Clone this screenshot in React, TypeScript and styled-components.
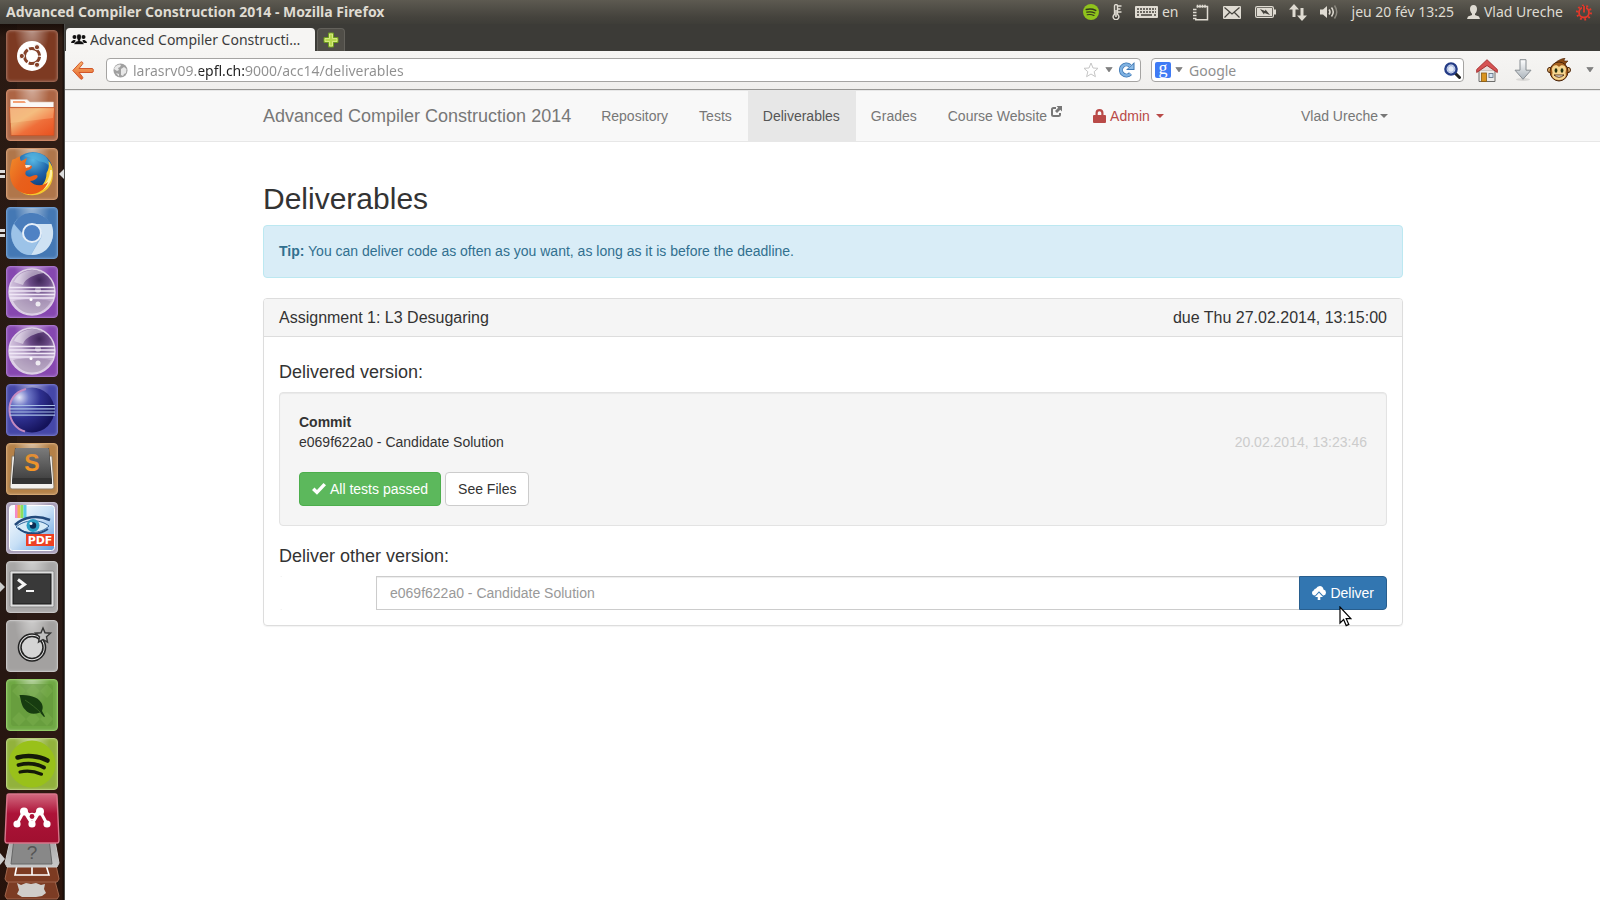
import React from 'react';
import styled, { createGlobalStyle } from 'styled-components';

const GlobalStyle = createGlobalStyle`
  *, *::before, *::after { box-sizing: border-box; }
  body { margin: 0; background: #fff; }
  button, input { font: inherit; margin: 0; }
  svg { display: block; flex: none; }
`;

const systemFont = '"Noto Sans", "Open Sans", sans-serif';
const pageFont = '"Liberation Sans", Arial, sans-serif';

/* ---------- desktop shell ---------- */

const Desktop = styled.div`
  min-height: 100vh;
  display: flex;
  flex-direction: column;
  font-family: ${systemFont};
`;

const TopPanel = styled.header`
  height: 24px;
  display: flex;
  align-items: center;
  justify-content: space-between;
  padding: 0 8px 0 6px;
  background: linear-gradient(#5d5a51, #45433d 70%, #3e3d38);
  color: #dfdbd2;
  font-size: 14px;
  line-height: 20px;
  white-space: nowrap;
`;

const WindowTitle = styled.strong`
  font-weight: 700;
`;

const Indicators = styled.div`
  display: flex;
  align-items: center;
  gap: 13px;
`;

const Indicator = styled.button<{ $minWidth?: number }>`
  display: flex;
  align-items: center;
  justify-content: center;
  gap: 4px;
  min-width: ${(p) => p.$minWidth ?? 0}px;
  padding: 0;
  border: 0;
  background: none;
  color: inherit;
`;

const Workspace = styled.div`
  flex: 1;
  display: flex;
  align-items: stretch;
`;

const Launcher = styled.nav`
  width: 65px;
  flex: none;
  display: flex;
  flex-direction: column;
  gap: 7px;
  padding: 6px 0 0 6px;
  border-right: 1px solid #4c4c4a;
  background: linear-gradient(90deg, rgba(0, 0, 0, 0.12) 17px, transparent 17px, transparent 62px, rgba(0, 0, 0, 0.4) 63px),
    linear-gradient(#1b0f0a, #301d14 14px, #2c1d18 60%, #2c150d);
`;

const Tile = styled.button<{ $bg: string; $edge: string }>`
  position: relative;
  width: 52px;
  height: 52px;
  flex: none;
  padding: 0;
  border: 1px solid ${(p) => p.$edge};
  border-radius: 4px;
  background: radial-gradient(ellipse at 50% -10%, rgba(255, 255, 255, 0.5), transparent 50%), ${(p) => p.$bg};
  box-shadow: inset 0 0 3px rgba(255, 255, 255, 0.3);

  & > svg {
    margin: -1px;
  }
`;

const Pips = styled.span<{ $double?: boolean }>`
  position: absolute;
  left: -7px;
  top: ${(p) => (p.$double ? 21 : 20)}px;
  width: 5px;
  height: ${(p) => (p.$double ? 8 : 10)}px;
  background: ${(p) => (p.$double ? 'linear-gradient(#ddd 3px, transparent 3px 5px, #ddd 5px)' : '#ccc')};
  clip-path: ${(p) => (p.$double ? 'none' : 'polygon(0 0, 100% 50%, 0 100%)')};
`;

const FocusArrow = styled.span`
  position: absolute;
  left: 52px;
  top: 20px;
  width: 5px;
  height: 10px;
  background: #ddd;
  clip-path: polygon(100% 0, 0 50%, 100% 100%);
`;

const FoldedStack = styled.div`
  margin: -6px 0 0 -6px;
`;

const Browser = styled.div`
  flex: 1;
  min-width: 0;
  display: flex;
  flex-direction: column;
  background: #fff;
`;

/* ---------- browser chrome ---------- */

const TabStrip = styled.div`
  height: 27px;
  display: flex;
  align-items: flex-end;
  gap: 2px;
  padding-left: 1px;
  background: #3c3b37;
`;

const Tab = styled.div`
  height: 23px;
  width: 249px;
  display: flex;
  align-items: center;
  gap: 3px;
  padding: 0 6px 0 5px;
  border-radius: 4px 4px 0 0;
  background: #f6f5f3;
  color: #3c3c3c;
  font-size: 14px;
  line-height: 20px;

  span {
    overflow: hidden;
    white-space: nowrap;
    text-overflow: ellipsis;
  }
`;

const NewTab = styled.button`
  width: 28px;
  height: 23px;
  display: grid;
  place-items: center;
  padding: 0;
  border: 1px solid #63615b;
  border-bottom: 0;
  border-radius: 4px 4px 0 0;
  background: #504e48;
`;

const Toolbar = styled.div`
  height: 39px;
  display: flex;
  align-items: center;
  padding: 0 6px 0 7px;
  border-bottom: 1px solid #979693;
  background: linear-gradient(#f6f5f3, #f0efed);
  font-size: 14px;
`;

const IconButton = styled.button<{ $gap?: number }>`
  flex: none;
  margin-left: ${(p) => p.$gap ?? 0}px;
  padding: 0;
  border: 0;
  background: none;
`;

const Field = styled.label<{ $basis: string; $gap: number }>`
  flex: ${(p) => p.$basis};
  min-width: 0;
  height: 24px;
  margin-left: ${(p) => p.$gap}px;
  display: flex;
  align-items: center;
  border: 1px solid #a5a4a2;
  border-radius: 4px;
  background: #fff;
`;

const AddressField = styled(Field)`
  padding: 0 5px 0 6px;
`;

const SearchField = styled(Field)`
  padding: 0 2px 0 3px;
`;

const FieldInput = styled.input`
  flex: 1;
  min-width: 0;
  height: 20px;
  padding: 0 0 0 6px;
  border: 0;
  outline: 0;
  background: none;
  color: #8f8f8f;
  &::placeholder { color: #8f8f8f; opacity: 1; }
`;

/* The host name is drawn darker than the rest of the address. */
const AddressInput = styled(FieldInput)`
  padding-left: 5px;
  color: transparent;
  background: linear-gradient(90deg, #8f8f8f 71px, #222 71px 118px, #8f8f8f 118px);
  background-clip: text;
  -webkit-background-clip: text;
`;

const GoogleMark = styled.span`
  width: 16px;
  height: 16px;
  flex: none;
  border-radius: 2px;
  background: #3f7bf5;
  color: #fff;
  font: 400 18px/12px "Liberation Serif", serif;
  text-align: center;
`;

/* ---------- web page ---------- */

const Page = styled.div`
  font-family: ${pageFont};
  font-size: 14px;
  line-height: 20px;
  color: #333;
`;

const Navbar = styled.nav`
  border: solid #e7e7e7;
  border-width: 1px 0;
  background: #f8f8f8;
`;

const Container = styled.div`
  max-width: 1171px;
  margin: 0 auto;
  padding: 0 15px 0 16px;
`;

const NavRow = styled(Container)`
  display: flex;
`;

const Brand = styled.a`
  padding: 15px 15px 15px 0;
  font-size: 18px;
  color: #777;
  text-decoration: none;
  white-space: nowrap;
`;

const NavLink = styled.a<{ $active?: boolean; $danger?: boolean }>`
  display: flex;
  align-items: center;
  gap: 4px;
  padding: 15px 16px 15px 15px;
  color: ${(p) => (p.$active ? '#555' : p.$danger ? '#b94a48' : '#777')};
  background: ${(p) => (p.$active ? '#e7e7e7' : 'transparent')};
  text-decoration: none;
  white-space: nowrap;

  & > sup { line-height: 0; align-self: flex-start; }
`;

const UserLink = styled(NavLink)`
  gap: 2px;
  margin-left: auto;
  padding-right: 15px;
`;

const Caret = styled.span<{ $space?: number }>`
  margin-left: ${(p) => p.$space ?? 0}px;
  border: 4px solid transparent;
  border-top-color: currentColor;
  border-bottom: 0;
`;

const Main = styled(Container).attrs({ as: 'main' })`
  padding-top: 40px;
`;

const Title = styled.h2`
  margin: 0 0 10px;
  font-size: 30px;
  line-height: 33px;
  font-weight: 400;
`;

const Alert = styled.div`
  margin-bottom: 20px;
  padding: 15px 15px 16px;
  border: 1px solid #bce8f1;
  border-radius: 4px;
  background: #d9edf7;
  color: #31708f;
`;

const Panel = styled.section`
  border: 1px solid #ddd;
  border-radius: 4px;
  box-shadow: 0 1px 1px rgba(0, 0, 0, 0.05);
`;

const PanelHeading = styled.header`
  display: flex;
  justify-content: space-between;
  padding: 10px 15px;
  border-bottom: 1px solid #ddd;
  border-radius: 3px 3px 0 0;
  background: #f5f5f5;
  font-size: 16px;
  line-height: 17px;
`;

const PanelTitle = styled.h3`
  margin: 0;
  font-size: 16px;
  font-weight: 400;
`;

const PanelBody = styled.div`
  padding: 25px 15px 15px;
`;

const SubTitle = styled.h4`
  margin: 0 0 10px;
  font-size: 18px;
  line-height: 20px;
  font-weight: 400;
`;

const Well = styled.div`
  margin-bottom: 20px;
  padding: 19px;
  border: 1px solid #e3e3e3;
  border-radius: 4px;
  background: #f5f5f5;
  box-shadow: inset 0 1px 1px rgba(0, 0, 0, 0.05);
`;

const CommitRow = styled.div`
  display: flex;
  justify-content: space-between;
  margin-bottom: 20px;

  time { color: #ccc; }
`;

const ButtonRow = styled.div`
  display: flex;
  gap: 4px;
`;

const tones = {
  success: ['#fff', '#5cb85c', '#4cae4c'],
  plain: ['#333', '#fff', '#ccc'],
  primary: ['#fff', '#3276b1', '#285e8e'],
};

const Button = styled.button<{ $tone: keyof typeof tones; $attached?: boolean }>`
  height: 34px;
  display: flex;
  align-items: center;
  gap: 4px;
  padding: 6px 12px;
  border: 1px solid ${(p) => tones[p.$tone][2]};
  border-radius: ${(p) => (p.$attached ? '0 4px 4px 0' : '4px')};
  background: ${(p) => tones[p.$tone][1]};
  color: ${(p) => tones[p.$tone][0]};
  white-space: nowrap;
`;

const InputGroup = styled.form`
  display: flex;
`;

const Addon = styled.label`
  width: 97px;
  border-radius: 4px 0 0 4px;
  background: linear-gradient(#f1f1f1, #f1f1f1) 0 0 / 3px 1px no-repeat,
    linear-gradient(#f1f1f1, #f1f1f1) 0 100% / 3px 1px no-repeat;
`;

const VersionInput = styled.input`
  flex: 1;
  min-width: 0;
  height: 34px;
  padding: 6px 13px;
  border: 1px solid #ccc;
  border-right: 0;
  box-shadow: inset 0 1px 1px rgba(0, 0, 0, 0.075);
  outline: 0;
  &::placeholder { color: #999; opacity: 1; }
`;

const ButtonHolder = styled.div`
  position: relative;
`;

const Pointer = styled.svg`
  position: absolute;
  left: 40px;
  top: 30px;
`;

/* ---------- drawings ---------- */

const DownArrow = () => (
  <svg width="8" height="6" viewBox="0 0 8 6">
    <path d="M.8.5h6.400L4 5z" fill="#808080" stroke="#666" strokeWidth=".5" />
  </svg>
);

const UbuntuIcon = () => (
  <svg width="52" height="52" viewBox="0 0 52 52">
    <circle cx="26" cy="26" r="15" fill="#fff" />
    <circle cx="26" cy="26" r="7.6" fill="none" stroke="#85422a" strokeWidth="3" strokeDasharray="14.4 1.5" strokeDashoffset="-.8" />
    <g fill="#85422a" stroke="#fff" strokeWidth="1">
      <circle cx="15.8" cy="26" r="2.6" />
      <circle cx="31" cy="17.2" r="2.6" />
      <circle cx="31" cy="34.8" r="2.6" />
    </g>
  </svg>
);

const FolderIcon = () => (
  <svg width="52" height="52" viewBox="0 0 52 52">
    <defs>
      <linearGradient id="folder" x1="0" y1="0" x2="1" y2="1">
        <stop offset="0" stopColor="#f0a070" />
        <stop offset=".35" stopColor="#efb072" />
        <stop offset=".6" stopColor="#ef6f3a" />
        <stop offset="1" stopColor="#e8501e" />
      </linearGradient>
    </defs>
    <path d="M4.500 18V10.500h16.500l3 2.500h23.500V19z" fill="#fbf8f6" stroke="#d8c0b0" strokeWidth=".6" />
    <path d="M7 12h11.500l1.500 2H7z" fill="#f3a074" />
    <path d="M3.500 18.500h45L48 46.500H5z" fill="url(#folder)" stroke="#c4562a" strokeWidth=".8" />
    <path d="M4 19.500h44L47 29 4.500 34z" fill="#ffd9a0" opacity=".3" />
  </svg>
);

const FirefoxIcon = () => (
  <svg width="52" height="52" viewBox="0 0 52 52">
    <defs>
      <radialGradient id="ffblue" cx=".5" cy=".2" r=".8">
        <stop offset="0" stopColor="#58b8e4" />
        <stop offset=".5" stopColor="#1d62a8" />
        <stop offset="1" stopColor="#0a2f66" />
      </radialGradient>
      <linearGradient id="fffox" x1="0" y1="0" x2="1" y2=".6">
        <stop offset="0" stopColor="#f08a2a" />
        <stop offset=".5" stopColor="#e8601c" />
        <stop offset="1" stopColor="#ea5a14" />
      </linearGradient>
    </defs>
    <circle cx="27" cy="24" r="20" fill="url(#ffblue)" />
    <path d="M18 8c5-4 15-5 22 1 3 4 4 6 4 10-5-7-10-4-13-7-4-3-8-2-13-4z" fill="#54b4df" opacity=".6" />
    <path d="M46.500 20c2 12-2 20-9 24-8 5-18 4-24-1 8 2 17 0 22-5 4-4 5-9 5-13 2-3 3-7 2-12 2 2 3 4 4 7z" fill="#f5c92e" />
    <path d="M44 22c0 8-4 14-9 17l5-3-3 6c6-4 10-11 9-20z" fill="#fff0a0" />
    <path d="M6 12c1-1 2-1 3-1 1-1 3-2 5-2.500 0 2 0 3 1 4.500 3-1 4-2 6-3-.5 2-1.500 4-2 6 2 2 5 1 7 2 0 3-3 4-6 5-1 2-1 4 1 5 3 2 6-1 9-1 2 0 2 2 1 3-2 2-4 3-7 3 4 5 12 6 18 1-3 9-12 13-21 12C10 44 4 36 4 26c0-6 1-9 2-14z" fill="url(#fffox)" />
    <path d="M19 17c2 0 5 0 6 .5-1 1.500-3 2-5 2.500z" fill="#fbe6d0" />
  </svg>
);

const ChromiumIcon = () => (
  <svg width="52" height="52" viewBox="0 0 52 52">
    <circle cx="26" cy="27" r="21" fill="#8db6e0" />
    <path d="M8 17C13 8 19 6 26 6s15 4 19 11H26c-7 0-10 5-9 10z" fill="#4a7dbb" />
    <path d="M45.500 17C49 26 47 36 40 43c-5 4-10 5-15 5l10-17c3-5-1-12-9-14z" fill="#cfe2f3" />
    <path d="M8 17C4 25 5 36 12 43c4 4 8 5 13 5l7-14c-5 4-13 2-15-5z" fill="#9cc3e8" />
    <circle cx="26" cy="26" r="9" fill="#4f82c4" stroke="#e6eff8" strokeWidth="2" />
  </svg>
);

const EclipseIcon = () => (
  <svg width="52" height="52" viewBox="0 0 52 52">
    <defs>
      <radialGradient id="eclipse" cx=".22" cy=".22" r=".85">
        <stop offset="0" stopColor="#e4e6f8" />
        <stop offset=".25" stopColor="#6d76c6" />
        <stop offset=".55" stopColor="#2f3190" />
        <stop offset="1" stopColor="#14125a" />
      </radialGradient>
    </defs>
    <circle cx="26" cy="26" r="22.500" fill="url(#eclipse)" />
    <path d="M20 5C8 8 3 17 3.500 27S10 45 19 47.500" fill="none" stroke="#c48ac0" strokeWidth="2" />
    <path d="M4 21.500h45M3.500 24.800h45.500M3.500 28h45.500M4 31.200h45" stroke="#a9c0e6" strokeWidth="1.200" />
  </svg>
);

const GlassEclipseIcon = ({ id }: { id: string }) => (
  <svg width="52" height="52" viewBox="0 0 52 52">
    <defs>
      <radialGradient id={id} cx=".66" cy=".24" r=".72">
        <stop offset="0" stopColor="#3f2658" />
        <stop offset=".3" stopColor="#6a4a86" />
        <stop offset=".6" stopColor="#b8a2c8" />
        <stop offset="1" stopColor="#ddd0e6" />
      </radialGradient>
    </defs>
    <circle cx="26" cy="26" r="23" fill={`url(#${id})`} stroke="#ddd0e6" strokeWidth="1.500" />
    <path d="M8 16C12 8 18 4.500 27 4c4 0 8 1 11 3-8 1-19 5-21 12z" fill="#fff" opacity=".45" />
    <path d="M7 35c6-2 30-2 38 0-4 8-11 12.500-19 12.500S11 43 7 35z" fill="#8e7a9c" opacity=".45" />
    <path d="M3.500 21.500h45M3 25h46M3 28.500h46M4 32h44" stroke="#f0e8f6" strokeWidth="1.400" />
    <circle cx="32" cy="24" r="3" fill="#fff" opacity=".4" />
    <circle cx="32" cy="38" r="2.500" fill="#fff" opacity=".8" />
    <circle cx="25" cy="33.500" r="1.500" fill="#fff" />
  </svg>
);

const SublimeIcon = () => (
  <svg width="52" height="52" viewBox="0 0 52 52">
    <defs>
      <linearGradient id="key" x1="0" y1="0" x2="0" y2="1">
        <stop offset="0" stopColor="#7b7b7b" />
        <stop offset="1" stopColor="#444" />
      </linearGradient>
      <linearGradient id="sub" x1="0" y1="0" x2="0" y2="1">
        <stop offset="0" stopColor="#d98b3a" />
        <stop offset="1" stopColor="#ff9a1e" />
      </linearGradient>
    </defs>
    <path d="M6 13h40l2 31q0 2-2 2H6q-2 0-2-2z" fill="#f2f0ed" stroke="#8c7a62" strokeWidth="1" />
    <path d="M9 5h34l3 32v4H6v-4z" fill="#333" />
    <path d="M10 5h32q1 0 1 2l2 28H7L9 7q0-2 1-2z" fill="url(#key)" />
    <text x="26" y="28" textAnchor="middle" fontFamily="Liberation Sans" fontSize="23" fontWeight="700" fill="url(#sub)">S</text>
  </svg>
);

const PdfIcon = () => (
  <svg width="52" height="52" viewBox="0 0 52 52">
    <defs>
      <linearGradient id="pdf" x1="0" y1="0" x2="1" y2="1">
        <stop offset="0" stopColor="#fff" />
        <stop offset=".5" stopColor="#c8e0f6" />
        <stop offset="1" stopColor="#5d9be0" />
      </linearGradient>
    </defs>
    <rect x="3.500" y="3.500" width="45" height="45" rx="3" fill="url(#pdf)" stroke="#fff" />
    <path d="M10.500 3v13" stroke="#f48ac8" strokeWidth="3" />
    <path d="M13 3v13" stroke="#f0b050" strokeWidth="3" />
    <path d="M16 3v13" stroke="#8ce05c" strokeWidth="3" />
    <path d="M19 3v13" stroke="#58c8e8" strokeWidth="3" />
    <path d="M10 25c8-7 23-9 33-1-8 8-24 9-33 1z" fill="#d6ebf7" stroke="#31659a" strokeWidth="1" />
    <path d="M9 23C18 14 32 13 44 18" fill="none" stroke="#234a7c" strokeWidth="2.500" />
    <path d="M12 26c8 7 20 8 30 1" fill="none" stroke="#234a7c" strokeWidth="1.800" />
    <circle cx="27" cy="23.500" r="6.500" fill="#2b9fc4" />
    <circle cx="27" cy="23.500" r="3.200" fill="#0c2d54" />
    <circle cx="25" cy="21.500" r="1.500" fill="#fff" />
    <rect x="20" y="32" width="28" height="12" fill="#ee4023" />
    <text x="34" y="42" textAnchor="middle" fontFamily="DejaVu Sans" fontSize="11" fontWeight="700" fill="#fff">PDF</text>
  </svg>
);

const TerminalIcon = () => (
  <svg width="52" height="52" viewBox="0 0 52 52">
    <rect x="4" y="10" width="44" height="36" rx="1.500" fill="#dedede" stroke="#8a8a8a" />
    <rect x="7" y="13" width="38" height="30" fill="#393939" stroke="#191919" />
    <path d="M12 18.500l6.500 5-6.500 4.500" fill="none" stroke="#f4f4f4" strokeWidth="3" />
    <path d="M20 30h8" stroke="#f4f4f4" strokeWidth="2" />
  </svg>
);

const StarDialIcon = () => (
  <svg width="52" height="52" viewBox="0 0 52 52">
    <circle cx="26" cy="27.500" r="13.500" fill="#e9e9e9" stroke="#222" strokeWidth="1.600" />
    <circle cx="26" cy="27.500" r="11" fill="#d4d4d4" stroke="#222" strokeWidth="1.600" />
    <path d="M37 8l2 4.800 5.500.4-4 3.600 1 5.400L37 19.500l-4.500 2.700 1-5.400-4-3.600 5.500-.4z" fill="#c0c0c0" stroke="#333" strokeWidth="1.400" />
  </svg>
);

const LeafIcon = () => (
  <svg width="52" height="52" viewBox="0 0 52 52">
    <rect x="5" y="5" width="42" height="42" rx="3" fill="#63963a" opacity=".55" />
    <path d="M6 12l7-7 7 7-7 7zM20 12l7-7 7 7-7 7zM34 12l7-7 6 7-6 7zM6 40l7-7 7 7-7 7zM20 40l7-7 7 7-7 7zM34 40l7-7 6 7-6 7z" fill="#8cc05c" opacity=".25" />
    <path d="M13.500 16c9 0 18 1 22 8 2 4 1 6 .5 8l3 5.500-1 .5-4-4.500c-6 2-11 2-15-3-4-4-4-10-5.500-14.500z" fill="#173c10" />
    <path d="M19 21c6 4 11 8 16 13" stroke="#3f6b28" fill="none" strokeWidth=".8" />
  </svg>
);

const SpotifyIcon = () => (
  <svg width="52" height="52" viewBox="0 0 52 52">
    <circle cx="26" cy="26" r="23.500" fill="#99c11a" />
    <g fill="none" stroke="#151a08" strokeLinecap="round">
      <path d="M11.500 19.500c9-2.500 21-2 30 3" strokeWidth="4.600" />
      <path d="M12.500 27c8-2 18-1.500 25.500 2.500" strokeWidth="3.800" />
      <path d="M14 34c7-1.600 14-1 21.500 2.200" strokeWidth="3.200" />
    </g>
  </svg>
);

/* The bottom of the launcher, where entries tilt back and overlap. */
const StackDrawing = () => (
  <svg width="65" height="109" viewBox="0 0 65 109">
    <defs>
      <linearGradient id="mend" x1="0" y1="0" x2="0" y2="1">
        <stop offset="0" stopColor="#d26a80" />
        <stop offset=".4" stopColor="#ad1338" />
        <stop offset="1" stopColor="#a01030" />
      </linearGradient>
      <linearGradient id="grey" x1="0" y1="0" x2="0" y2="1">
        <stop offset="0" stopColor="#a8a8a8" />
        <stop offset="1" stopColor="#c8c8c8" />
      </linearGradient>
    </defs>
    <path d="M9 90h46l4 15-2 3H7l-2-3z" fill="#7c3c24" stroke="#a0654c" />
    <path d="M17 92l4 2 5-2 5 1 5-1 5 2 4-1-1 5 2 4-4 3-6 1H22l-5-3 2-4z" fill="#cfcdca" />
    <path d="M8 74h48l3 14-2 3H7l-2-3z" fill="#7d3b22" stroke="#a0654c" />
    <path d="M17 74l-2 10h34l-3-10M32 74v10" fill="none" stroke="#fff" strokeWidth="1.600" />
    <path d="M10 50h45l4 22-2 4H7l-2-4z" fill="url(#grey)" stroke="#ccc" />
    <path d="M14 48h35l3 25H11z" fill="#888" stroke="#666" />
    <text x="32" y="68" textAnchor="middle" fontFamily="Liberation Sans" fontSize="19" fill="#555">?</text>
    <path d="M9 3h46q2 0 2 2l2 44q0 3-2 3H7q-2 0-2-3L7 5q0-2 2-2z" fill="url(#mend)" stroke="#d8758a" strokeWidth="1.400" />
    <path d="M17 33l7-13 8 13 8-13 7 13M24 20l8 6 8-6" stroke="#fff" strokeWidth="3" fill="none" />
    <g fill="#fff">
      <circle cx="17" cy="33" r="3.600" />
      <circle cx="32" cy="33" r="3.600" />
      <circle cx="47" cy="33" r="3.600" />
      <circle cx="24" cy="20.500" r="4" />
      <circle cx="40" cy="20.500" r="4" />
    </g>
    <circle cx="32" cy="25.500" r="3.800" fill="#fff" />
    <circle cx="32" cy="25.500" r="2.400" fill="#ad1338" />
    <path d="M0 62l5 6-5 6z" fill="#ccc" />
  </svg>
);

const MiniSpotify = () => (
  <svg width="16" height="16" viewBox="0 0 16 16">
    <circle cx="8" cy="8" r="8" fill="#8fc31c" />
    <g fill="none" stroke="#32381c" strokeLinecap="round">
      <path d="M3.300 5.500c3-.8 6.500-.6 9.400.9" strokeWidth="1.600" />
      <path d="M3.800 8.200c2.700-.7 5.600-.4 8 .8" strokeWidth="1.300" />
      <path d="M4.200 10.800c2.300-.5 4.700-.3 6.800.7" strokeWidth="1.100" />
    </g>
  </svg>
);

const Thermometer = () => (
  <svg width="10" height="16" viewBox="0 0 10 16">
    <path d="M2.500 2a1.500 1.500 0 013 0v8.300a2.900 2.900 0 11-3 0z" fill="none" stroke="#dfdbd2" strokeWidth="1.400" />
    <path d="M4 6v7" stroke="#dfdbd2" strokeWidth="1.600" />
    <path d="M6 2h3.500M6 5h2.500M6 8h3.500" stroke="#dfdbd2" strokeWidth="1.500" />
  </svg>
);

const Keyboard = () => (
  <svg width="23" height="12" viewBox="0 0 23 12">
    <rect width="23" height="12" rx="1" fill="#dfdbd2" />
    <path d="M2 3h19M2 6h19" stroke="#45433d" strokeWidth="1.600" strokeDasharray="2 1" />
    <path d="M2 9h2M6 9h11M19 9h2" stroke="#45433d" strokeWidth="1.600" />
  </svg>
);

const Notepad = () => (
  <svg width="17" height="17" viewBox="0 0 17 17">
    <path d="M4.500 2.500h11v13.200H3M1 5.500h3.500M1 8.500h3.500M1 11.500h3.500M1 14.500h3.500M5.500.8v3M8 .8v3M10.500.8v3M13 .8v3" fill="none" stroke="#dfdbd2" strokeWidth="1.500" />
  </svg>
);

const Mail = () => (
  <svg width="18" height="13" viewBox="0 0 18 13">
    <rect width="18" height="13" rx="1" fill="#dfdbd2" />
    <path d="M1.500 1.500L9 8l7.500-6.500M1.500 11.500l5-5M16.500 11.500l-5-5" fill="none" stroke="#45433d" strokeWidth="1.200" />
  </svg>
);

const Battery = () => (
  <svg width="21" height="12" viewBox="0 0 21 12">
    <rect x=".6" y=".6" width="17.800" height="10.800" rx="1.500" fill="none" stroke="#dfdbd2" strokeWidth="1.200" />
    <rect x="2" y="2" width="15" height="8" fill="#dfdbd2" />
    <path d="M19 3.500h2v5h-2z" fill="#dfdbd2" />
    <path d="M5 3l5 2 .5-1.500L15 9 9.500 7 9 8.500z" fill="#45433d" />
  </svg>
);

const Transfer = () => (
  <svg width="18" height="17" viewBox="0 0 18 17">
    <path d="M5 0l5 5.500H6.500V13h-3V5.500H0zM13 17l-5-5.500h3.500V4h3v7.500H18z" fill="#dfdbd2" />
  </svg>
);

const Speaker = () => (
  <svg width="19" height="16" viewBox="0 0 19 16">
    <path d="M0 5.500h3L7 2v12l-4-3.500H0z" fill="#dfdbd2" />
    <path d="M9 5.500q2 2.500 0 5M11.500 3.500q3.500 4.500 0 9" fill="none" stroke="#dfdbd2" strokeWidth="1.500" />
    <path d="M14.500 1.500q4.500 6.500 0 13" fill="none" stroke="#8b887f" strokeWidth="1.500" />
  </svg>
);

const Person = () => (
  <svg width="13" height="14" viewBox="0 0 13 14">
    <path d="M6.500 0C9 0 10 1.800 10 4S9 8 8 8.800V10l4 1.500 1 2.500H0l1-2.500L5 10V8.800C4 8 3 6 3 4s1-4 3.500-4z" fill="#dfdbd2" />
  </svg>
);

const PowerGear = () => (
  <svg width="16" height="17" viewBox="0 0 16 17">
    <circle cx="8" cy="8.500" r="6.900" fill="none" stroke="#e2382a" strokeWidth="2.200" strokeDasharray="1.800 2.535" />
    <circle cx="8" cy="8.500" r="5" fill="none" stroke="#e2382a" strokeWidth="1.800" />
    <path d="M8 2v6.500" stroke="#494740" strokeWidth="4" />
    <path d="M8 2v6.500" stroke="#e2382a" strokeWidth="1.800" />
  </svg>
);

const GroupIcon = () => (
  <svg width="16" height="12" viewBox="0 0 16 12">
    <g fill="#111">
      <circle cx="3.500" cy="3" r="2" />
      <circle cx="12.500" cy="3" r="2" />
      <path d="M0 9q0-2 2.500-3h2L4 9zM16 9q0-2-2.500-3h-2l.5 3z" />
      <path d="M8 0c1.600 0 2.400 1.300 2.400 2.800 0 1.700-.7 2.600-1.200 3.200v.8c2.300.7 3.800 1.500 3.800 3.700H3c0-2.200 1.500-3 3.800-3.700V6C6.300 5.400 5.600 4.500 5.600 2.800 5.600 1.300 6.400 0 8 0z" stroke="#f6f5f3" strokeWidth=".6" />
    </g>
  </svg>
);

const PlusIcon = () => (
  <svg width="16" height="16" viewBox="0 0 16 16">
    <path d="M5.500 1h5v4.500H15v5h-4.500V15h-5v-4.500H1v-5h4.500z" fill="#a9cf3c" stroke="#6d9a22" strokeWidth="1" />
    <path d="M6.500 2h3v4.500H14v3H9.500V14h-3V9.500H2v-3h4.500z" fill="#b6d84c" stroke="#dff08e" strokeWidth=".8" />
  </svg>
);

const BackIcon = () => (
  <svg width="22" height="19" viewBox="0 0 22 19">
    <defs>
      <linearGradient id="back" x1="0" y1="0" x2="0" y2="1">
        <stop offset="0" stopColor="#f6b26a" />
        <stop offset="1" stopColor="#e4622a" />
      </linearGradient>
    </defs>
    <path d="M.8 9.500L8.500 1.200q1.500-1 2.200.3.500 1-.3 1.800L7 7.500h13q1.400 0 1.400 2t-1.400 2H7l3.400 4.200q.8 1 .2 1.900-1 1.200-2.200.2z" fill="url(#back)" stroke="#d1562a" strokeWidth="1" />
  </svg>
);

const Globe = () => (
  <svg width="15" height="15" viewBox="0 0 15 15">
    <circle cx="7.500" cy="7.500" r="7" fill="#a0a0a0" />
    <path d="M3 3q3-2.500 5-1L7 4 5 5l1 2-2 1-3-2q.5-2 2-3zM8 6l3-2 2.500 2-.5 4-2 1-1 2-2-1V9zM3 10l3 1v2.500z" fill="#e8e8e8" />
  </svg>
);

const Star = () => (
  <svg width="16" height="16" viewBox="0 0 16 16">
    <path d="M8 1l2 5 5 .3-3.800 3.400 1.200 5L8 12l-4.400 2.700 1.200-5L1 6.300 6 6z" fill="#fff" stroke="#c6c6c6" strokeWidth="1" />
  </svg>
);

const Reload = () => (
  <svg width="16" height="16" viewBox="0 0 16 16">
    <path d="M11.500 11.700A5.500 5.500 0 1111 3.800" fill="none" stroke="#3f78b4" strokeWidth="4" />
    <path d="M15.500 0v8H7z" fill="#3f78b4" />
    <path d="M11.500 11.700A5.500 5.500 0 1111 3.800" fill="none" stroke="#7fb2e2" strokeWidth="2.400" />
    <path d="M14.500 2v5H9z" fill="#8fbde8" />
  </svg>
);

const Magnifier = () => (
  <svg width="17" height="17" viewBox="0 0 17 17">
    <path d="M10.500 10.500l5 5" stroke="#222" strokeWidth="3" strokeLinecap="round" />
    <circle cx="7" cy="7" r="5.600" fill="#e6ecf8" stroke="#243c86" strokeWidth="2.400" />
    <circle cx="7" cy="7" r="3.400" fill="none" stroke="#9fb2dc" strokeWidth="1" />
  </svg>
);

const HomeIcon = () => (
  <svg width="22" height="23" viewBox="0 0 22 23">
    <path d="M3 11h16v11.500H3z" fill="#ecebe8" stroke="#6e6e6c" />
    <path d="M11 5l8 6.500H3z" fill="#e8dcd8" />
    <rect x="5.500" y="14" width="5" height="8.500" fill="#d9941f" stroke="#8a5b12" strokeWidth=".8" />
    <rect x="13" y="14.500" width="4" height="4" fill="#d6e4f2" stroke="#6a7a8c" strokeWidth=".9" />
    <path d="M11 .7L.7 10.500v3L11 6.500l10.300 7v-3z" fill="#d65353" stroke="#a22a2a" strokeWidth=".9" />
  </svg>
);

const DownloadIcon = () => (
  <svg width="18" height="22" viewBox="0 0 18 22">
    <defs>
      <linearGradient id="down" x1="0" y1="0" x2="0" y2="1">
        <stop offset="0" stopColor="#fff" />
        <stop offset="1" stopColor="#a9b2ba" />
      </linearGradient>
    </defs>
    <ellipse cx="9" cy="20.500" rx="7" ry="1.500" fill="#d9d8d6" />
    <path d="M6 .7h6v10.500h5L9 20.300 1 11.200h5z" fill="url(#down)" stroke="#878d92" />
  </svg>
);

const Monkey = () => (
  <svg width="24" height="24" viewBox="0 0 24 24">
    <path d="M6 8q3-6 12-8-1 2-1 3 3 0 4 0-3 2-3 5z" fill="#8a4a14" stroke="#4a2408" strokeWidth=".6" />
    <circle cx="3.200" cy="12" r="2.700" fill="#e6b26a" stroke="#4a2408" />
    <circle cx="20.800" cy="12" r="2.700" fill="#e6b26a" stroke="#4a2408" />
    <ellipse cx="12" cy="13.500" rx="9" ry="9.500" fill="#a5601f" stroke="#4a2408" strokeWidth="1" />
    <path d="M12 9c2-3 7-2 7 2 0 2-.5 3-.5 4 1.500 4-2 7-6.500 7s-8-3-6.500-7c0-1-.5-2-.5-4 0-4 5-5 7-2z" fill="#f6d690" />
    <ellipse cx="9" cy="12.500" rx="1.400" ry="2.200" fill="#24300f" />
    <ellipse cx="15" cy="12.500" rx="1.400" ry="2.200" fill="#24300f" />
    <path d="M7 17q5 4.500 10 0z" fill="#fff" stroke="#4a2408" strokeWidth=".9" />
  </svg>
);

const ExternalMark = () => (
  <svg width="11" height="11" viewBox="0 0 11 11">
    <path d="M5 2H2.500Q1 2 1 3.500v5Q1 10 2.500 10h5Q9 10 9 8.500V7" fill="none" stroke="#777" strokeWidth="2" />
    <path d="M5.500 0H11v5.500L9.300 3.800 6 7 4 5l3.200-3.300z" fill="#777" />
  </svg>
);

const LockIcon = () => (
  <svg width="13" height="14" viewBox="0 0 13 14">
    <path d="M1 6h1.500V4Q2.500 0 6.500 0t4 4v2H12q1 0 1 1v6q0 1-1 1H1q-1 0-1-1V7q0-1 1-1zM4.700 6h3.600V4q0-1.800-1.800-1.800T4.700 4z" fill="#b94a48" />
  </svg>
);

const CheckIcon = () => (
  <svg width="14" height="12" viewBox="0 0 14 12">
    <path d="M0 7l2.500-2.500L5 7l6.500-7L14 2.200 5 11.700z" fill="#fff" />
  </svg>
);

const CloudUpIcon = () => (
  <svg width="14" height="14" viewBox="0 0 14 14">
    <path d="M3.200 9.500H2.800Q0 9.300 0 6.800 0 4.800 2 4.300 2.100 2.500 4 2.500 5.200 0 7.800 0q3.200.2 3.700 3.600Q14 4.200 14 6.700q-.2 2.500-2.500 2.800H11L7 5.300z" fill="#fff" />
    <path d="M7 6.700L11 11H8.300v3H5.700v-3H3z" fill="#fff" />
  </svg>
);

/* ---------- app ---------- */

export default function App() {
  return (
    <Desktop>
      <GlobalStyle />
      <TopPanel>
        <WindowTitle>Advanced Compiler Construction 2014 - Mozilla Firefox</WindowTitle>
        <Indicators>
          <Indicator aria-label="Spotify"><MiniSpotify /></Indicator>
          <Indicator aria-label="Temperature"><Thermometer /></Indicator>
          <Indicator><Keyboard />en</Indicator>
          <Indicator aria-label="Notes"><Notepad /></Indicator>
          <Indicator aria-label="Messages" $minWidth={20}><Mail /></Indicator>
          <Indicator aria-label="Battery"><Battery /></Indicator>
          <Indicator aria-label="Network"><Transfer /></Indicator>
          <Indicator aria-label="Sound"><Speaker /></Indicator>
          <Indicator $minWidth={102}>jeu 20 fév 13:25</Indicator>
          <Indicator><Person />Vlad Ureche</Indicator>
          <Indicator aria-label="Session"><PowerGear /></Indicator>
        </Indicators>
      </TopPanel>

      <Workspace>
        <Launcher aria-label="Launcher">
          <Tile aria-label="Dash" $bg="#7d3a22" $edge="#9a6450"><UbuntuIcon /></Tile>
          <Tile aria-label="Files" $bg="#ad6544" $edge="#d08a68"><FolderIcon /></Tile>
          <Tile aria-label="Firefox" $bg="#b0764a" $edge="#d29a70"><FirefoxIcon /><Pips $double /><FocusArrow /></Tile>
          <Tile aria-label="Chromium" $bg="#4478b4" $edge="#6b9bd0"><ChromiumIcon /><Pips $double /></Tile>
          <Tile aria-label="Eclipse" $bg="#8647b0" $edge="#a873cc"><GlassEclipseIcon id="glass1" /></Tile>
          <Tile aria-label="Eclipse Scala" $bg="#8647b0" $edge="#a873cc"><GlassEclipseIcon id="glass2" /></Tile>
          <Tile aria-label="Eclipse Classic" $bg="#4547a8" $edge="#6d70c6"><EclipseIcon /></Tile>
          <Tile aria-label="Sublime Text" $bg="#b58148" $edge="#d3a470"><SublimeIcon /></Tile>
          <Tile aria-label="PDF Viewer" $bg="#a499b4" $edge="#c6bfd0"><PdfIcon /></Tile>
          <Tile aria-label="Terminal" $bg="#a8a6a6" $edge="#c8c6c6"><TerminalIcon /><Pips /></Tile>
          <Tile aria-label="Dial" $bg="#a3a1a0" $edge="#c6c4c4"><StarDialIcon /></Tile>
          <Tile aria-label="Leaf" $bg="#6fa843" $edge="#92cc66"><LeafIcon /></Tile>
          <Tile aria-label="Spotify" $bg="#92b23c" $edge="#b8d07a"><SpotifyIcon /></Tile>
          <FoldedStack><StackDrawing /></FoldedStack>
        </Launcher>

        <Browser>
          <TabStrip>
            <Tab><GroupIcon /><span>Advanced Compiler Constructi…</span></Tab>
            <NewTab aria-label="New tab"><PlusIcon /></NewTab>
          </TabStrip>
          <Toolbar>
            <IconButton aria-label="Back"><BackIcon /></IconButton>
            <AddressField $basis="1" $gap={12}>
              <Globe />
              <AddressInput aria-label="Address" defaultValue="larasrv09.epfl.ch:9000/acc14/deliverables" />
              <IconButton aria-label="Bookmark"><Star /></IconButton>
              <IconButton aria-label="History" $gap={6}><DownArrow /></IconButton>
              <IconButton aria-label="Reload" $gap={6}><Reload /></IconButton>
            </AddressField>
            <SearchField $basis="0 1 313px" $gap={10}>
              <GoogleMark aria-hidden>g</GoogleMark>
              <IconButton aria-label="Search engine" $gap={4}><DownArrow /></IconButton>
              <FieldInput aria-label="Search" placeholder="Google" />
              <IconButton aria-label="Go"><Magnifier /></IconButton>
            </SearchField>
            <IconButton aria-label="Home" $gap={12}><HomeIcon /></IconButton>
            <IconButton aria-label="Downloads" $gap={16}><DownloadIcon /></IconButton>
            <IconButton aria-label="Greasemonkey" $gap={15}><Monkey /></IconButton>
            <IconButton aria-label="Script menu" $gap={15}><DownArrow /></IconButton>
          </Toolbar>

          <Page>
            <Navbar>
              <NavRow>
                <Brand href="#">Advanced Compiler Construction 2014</Brand>
                <NavLink href="#">Repository</NavLink>
                <NavLink href="#">Tests</NavLink>
                <NavLink href="#" $active>Deliverables</NavLink>
                <NavLink href="#">Grades</NavLink>
                <NavLink href="#">Course Website <sup><ExternalMark /></sup></NavLink>
                <NavLink href="#" $danger><LockIcon />Admin <Caret $space={2} /></NavLink>
                <UserLink href="#">Vlad Ureche<Caret /></UserLink>
              </NavRow>
            </Navbar>

            <Main>
              <Title>Deliverables</Title>
              <Alert><strong>Tip:</strong> You can deliver code as often as you want, as long as it is before the deadline.</Alert>
              <Panel>
                <PanelHeading>
                  <PanelTitle>Assignment 1: L3 Desugaring</PanelTitle>
                  <span>due Thu 27.02.2014, 13:15:00</span>
                </PanelHeading>
                <PanelBody>
                  <SubTitle>Delivered version:</SubTitle>
                  <Well>
                    <strong>Commit</strong>
                    <CommitRow>
                      <span>e069f622a0 - Candidate Solution</span>
                      <time>20.02.2014, 13:23:46</time>
                    </CommitRow>
                    <ButtonRow>
                      <Button type="button" $tone="success"><CheckIcon />All tests passed</Button>
                      <Button type="button" $tone="plain">See Files</Button>
                    </ButtonRow>
                  </Well>
                  <SubTitle>Deliver other version:</SubTitle>
                  <InputGroup onSubmit={(e) => e.preventDefault()}>
                    <Addon htmlFor="version" />
                    <VersionInput id="version" aria-label="Version" placeholder="e069f622a0 - Candidate Solution" />
                    <ButtonHolder>
                      <Button type="submit" $tone="primary" $attached><CloudUpIcon />Deliver</Button>
                      <Pointer width="13" height="21" viewBox="0 0 13 21">
                        <path d="M1 1v16l3.600-3.400 2.600 6 2.600-1.200-2.600-5.700h4.600z" fill="#fff" stroke="#000" strokeWidth="1.200" />
                      </Pointer>
                    </ButtonHolder>
                  </InputGroup>
                </PanelBody>
              </Panel>
            </Main>
          </Page>
        </Browser>
      </Workspace>
    </Desktop>
  );
}
